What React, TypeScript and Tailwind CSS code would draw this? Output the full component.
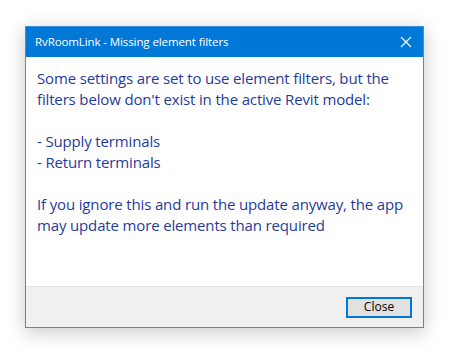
import React from "react";

export default function App() {
  return (
    <div
      className="w-[451px] h-[355px] bg-white pl-[25px] pt-[26px]"
      style={{ fontFamily: '"Open Sans", "Noto Sans", sans-serif' }}
    >
      {/* Dialog window */}
      <div className="w-[399px] h-[302px] flex flex-col border border-[#3d8fd9] bg-white shadow-[0_4px_18px_rgba(0,0,0,0.22)]">
        {/* Title bar */}
        <div className="h-[30px] bg-[#0078d7] flex items-center justify-between pl-[9px] pr-[8px] shrink-0">
          <span className="text-white text-[11.5px] leading-none tracking-[-0.1px]">RvRoomLink - Missing element filters</span>
          <svg width="12" height="12" viewBox="0 0 12 12" className="mr-[3px]">
            <path d="M1 1L11 11M11 1L1 11" stroke="white" strokeWidth="1.2" fill="none" />
          </svg>
        </div>

        {/* Body */}
        <div className="flex-1 px-[11px] pt-[11px] text-[15px] leading-[21px] tracking-[-0.15px] text-[#1f3c9c] whitespace-nowrap">
          <p>
            Some settings are set to use element filters, but the
            <br />
            filters below don't exist in the active Revit model:
          </p>
          <p className="mt-[21px]">- Supply terminals</p>
          <p>- Return terminals</p>
          <p className="mt-[21px]">
            If you ignore this and run the update anyway, the app
            <br />
            may update more elements than required
          </p>
        </div>

        {/* Footer */}
        <div className="h-[41px] bg-[#f0f0f0] border-t border-[#e4e4e4] flex items-center justify-end pr-[11px] shrink-0">
          <button className="w-[66px] h-[21px] border-2 border-[#0078d7] bg-[#e1e1e1] text-[12px] text-black leading-none">
            Close
          </button>
        </div>
      </div>
    </div>
  );
}
